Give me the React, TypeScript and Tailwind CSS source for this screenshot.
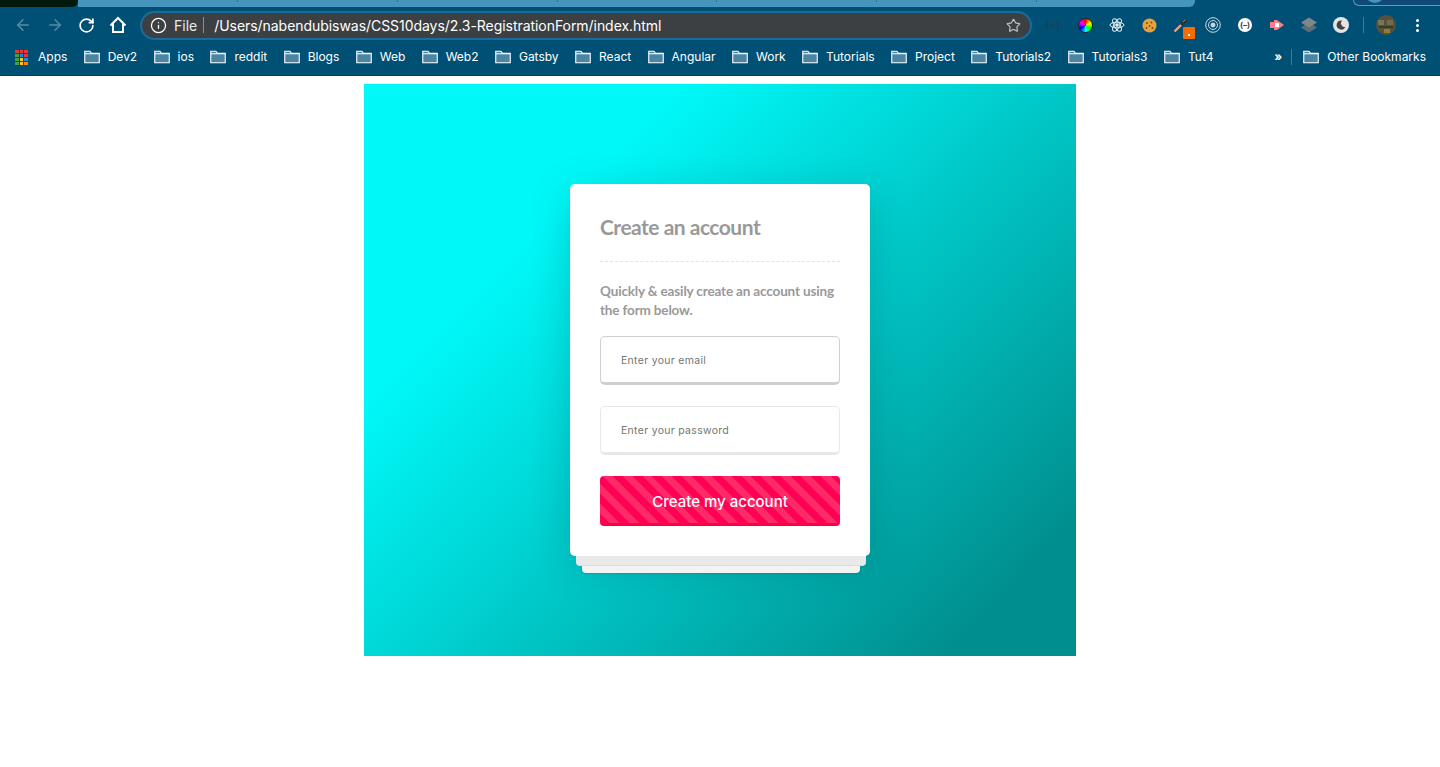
import { ArrowLeft, ArrowRight, RotateCw, Info, Star } from "lucide-react";

const tabs = [160, 160, 160, 159, 160, 160];

const bookmarks = [
  "Dev2", "ios", "reddit", "Blogs", "Web", "Web2", "Gatsby", "React", "Angular",
  "Work", "Tutorials", "Project", "Tutorials2", "Tutorials3", "Tut4",
];

function FolderIcon() {
  return (
    <svg width="16" height="14" viewBox="0 0 16 14" className="shrink-0">
      <path
        d="M0.75 1.25h5.2l1.6 2h7.7v9.5H0.75z"
        fill="#4a86a4"
        stroke="#fff"
        strokeWidth="1.1"
      />
      <path d="M0.75 3.75h14.5" stroke="#fff" strokeWidth="1" />
    </svg>
  );
}

function AppsIcon() {
  const colors = [
    "#e53935", "#e53935", "#e53935",
    "#43a047", "#1e88e5", "#e53935",
    "#43a047", "#fbc02d", "#1e88e5",
    "#43a047", "#fbc02d", "#fb8c00",
  ];
  return (
    <div className="grid grid-cols-3 gap-[1px] w-[13px] shrink-0">
      {colors.map((c, i) => (
        <div key={i} className="h-[3px]" style={{ backgroundColor: c }} />
      ))}
    </div>
  );
}

function HomeIcon() {
  return (
    <svg width="18" height="18" viewBox="0 0 18 18" fill="none" stroke="#fff" strokeWidth="2">
      <path d="M1.5 9.5 9 2l7.5 7.5" strokeLinejoin="miter" />
      <path d="M4 7.5V16h10V7.5" />
    </svg>
  );
}

function ExtensionIcons() {
  return (
    <div className="flex items-center ml-[5px]">
      <div className="w-8 flex justify-center">
        <span className="text-[10px] font-bold text-[#1d4258] tracking-tight">{"{=}"}</span>
      </div>
      <div className="w-8 flex justify-center">
        <div className="w-[15px] h-[15px] rounded-full bg-[conic-gradient(#f00,#ff0,#0f0,#0ff,#00f,#f0f,#f00)] border border-[#222]" />
      </div>
      <div className="w-8 flex justify-center">
        <svg width="16" height="16" viewBox="0 0 16 16" fill="none" stroke="#e4eef3" strokeWidth="1">
          <ellipse cx="8" cy="8" rx="7" ry="2.8" />
          <ellipse cx="8" cy="8" rx="7" ry="2.8" transform="rotate(60 8 8)" />
          <ellipse cx="8" cy="8" rx="7" ry="2.8" transform="rotate(120 8 8)" />
          <circle cx="8" cy="8" r="1.3" fill="#e4eef3" />
        </svg>
      </div>
      <div className="w-8 flex justify-center">
        <svg width="15" height="15" viewBox="0 0 15 15">
          <circle cx="7.5" cy="7.5" r="7" fill="#e9a23b" />
          <circle cx="5" cy="5" r="1" fill="#7a4a12" />
          <circle cx="9.5" cy="4.5" r="0.9" fill="#7a4a12" />
          <circle cx="7.5" cy="8" r="0.9" fill="#7a4a12" />
          <circle cx="4.5" cy="10" r="0.9" fill="#7a4a12" />
          <circle cx="10.5" cy="10" r="1" fill="#7a4a12" />
        </svg>
      </div>
      <div className="w-8 flex justify-center relative">
        <svg width="16" height="16" viewBox="0 0 16 16">
          <path d="M1.5 14.5 8.5 7.5" stroke="#e2a58f" strokeWidth="2.4" />
          <path d="M8 8 13.5 2.5" stroke="#2f3336" strokeWidth="3.6" />
          <path d="M10 5 12.5 2.5" stroke="#8d9194" strokeWidth="1" />
        </svg>
        <div className="absolute left-[18px] top-[10px] w-3 h-3 rounded-[1px] bg-[#f56c00] flex items-end justify-center pb-[3px]">
          <div className="w-[2px] h-[2px] bg-white" />
        </div>
      </div>
      <div className="w-8 flex justify-center">
        <svg width="16" height="16" viewBox="0 0 16 16" fill="none" stroke="#c9dbe4">
          <circle cx="8" cy="8" r="7.3" />
          <circle cx="8" cy="8" r="4.5" />
          <circle cx="8" cy="8" r="2" fill="#c9dbe4" />
        </svg>
      </div>
      <div className="w-8 flex justify-center">
        <div className="w-[14px] h-[14px] rounded-full bg-white flex items-center justify-center text-[8px] leading-none font-bold text-[#444]">
          (–)
        </div>
      </div>
      <div className="w-8 flex justify-center">
        <svg width="16" height="12" viewBox="0 0 16 12">
          <path d="M1 3h4V1h3l7 5-7 5H5V9H1z" fill="#ff7b86" />
          <rect x="6" y="4" width="4" height="4" fill="#fff" />
        </svg>
      </div>
      <div className="w-8 flex justify-center">
        <svg width="16" height="16" viewBox="0 0 16 16">
          <path d="M8 5.5 16 10.5 8 15.5 0 10.5z" fill="#5f6f78" />
          <path d="M8 0.5 16 5.5 8 10.5 0 5.5z" fill="#80878b" />
        </svg>
      </div>
      <div className="w-8 flex justify-center">
        <svg width="16" height="16" viewBox="0 0 16 16">
          <circle cx="8" cy="8" r="8" fill="#e3e3e3" />
          <path d="M9 3.5a4.6 4.6 0 1 0 3.4 6.6A4 4 0 0 1 9 3.5z" fill="#444" />
        </svg>
      </div>
      <div className="w-px h-[16px] bg-[#3f7d9c] mx-[6px]" />
      <svg width="20" height="20" viewBox="0 0 20 20" className="ml-[6px]">
        <defs>
          <clipPath id="avatar-clip">
            <circle cx="10" cy="10" r="10" />
          </clipPath>
        </defs>
        <g clipPath="url(#avatar-clip)">
          <rect width="20" height="20" fill="#56513c" />
          <rect x="2" y="5" width="6" height="5" fill="#7d7650" />
          <rect x="11" y="5" width="6" height="5" fill="#736c4b" />
          <rect x="3" y="11" width="14" height="2" fill="#3b3a30" />
          <rect x="8" y="14" width="6" height="4" fill="#8f7f2e" />
        </g>
      </svg>
      <div className="flex flex-col gap-[2px] ml-[20px] mr-[10px]">
        <div className="w-[3px] h-[3px] rounded-full bg-white" />
        <div className="w-[3px] h-[3px] rounded-full bg-white" />
        <div className="w-[3px] h-[3px] rounded-full bg-white" />
      </div>
    </div>
  );
}

function BrowserChrome() {
  return (
    <div className="font-['Inter',sans-serif] bg-[#005076]">
      {/* tab strip */}
      <div className="flex h-[7px]">
        <div className="w-[78px] bg-[#021a0c] rounded-br-[6px]" />
        <div className="flex w-[1117px] bg-[#4695bd] rounded-br-[6px] overflow-hidden">
          {tabs.map((w, i) => (
            <div key={i} className="h-[2px] border-r border-[#35708f]" style={{ width: w }} />
          ))}
        </div>
        <div className="ml-[158px] flex-1 h-[6px] overflow-hidden bg-[#0f4a78] border-l border-b border-[#5d9cc0] rounded-bl-[8px]">
          <div className="w-[20px] h-[20px] -mt-[17px] ml-[11px] rounded-full bg-[#4695bd]" />
        </div>
      </div>
      {/* toolbar */}
      <div className="flex items-center h-[36px] pl-[14px]">
        <ArrowLeft size={18} strokeWidth={2} className="text-[#5a8aa3]" />
        <ArrowRight size={18} strokeWidth={2} className="text-[#5a8aa3] ml-[14px]" />
        <RotateCw size={17} strokeWidth={2.4} className="text-white ml-[14px]" />
        <div className="ml-[14px]">
          <HomeIcon />
        </div>
        <div className="flex items-center w-[892px] h-[29px] ml-[13px] rounded-full bg-[#3c4043] border-2 border-[#1a6b9e]">
          <Info size={17} strokeWidth={1.8} className="text-white ml-[8px]" />
          <span className="ml-[7px] text-[14px] text-[#e8eaed]">File</span>
          <div className="w-px h-[16px] bg-[#8a8d90] ml-[6px]" />
          <span className="ml-[10px] text-[14px] tracking-[-0.05px] text-white">/Users/nabendubiswas/CSS10days/2.3-RegistrationForm/index.html</span>
          <Star size={15} strokeWidth={1.8} className="text-[#c4c7c9] ml-auto mr-[9px]" />
        </div>
        <ExtensionIcons />
      </div>
      {/* bookmarks bar */}
      <div className="flex items-center h-[33px] pl-[15px] pb-[4px] border-b border-[#03395a] text-[12px] text-white">
        <AppsIcon />
        <span className="ml-[10px]">Apps</span>
        {bookmarks.map((b) => (
          <div key={b} className="flex items-center gap-2 ml-[16.4px]">
            <FolderIcon />
            <span>{b}</span>
          </div>
        ))}
        <span className="ml-auto font-bold">»</span>
        <div className="w-px h-[16px] bg-[#3f7d9c] ml-[9px]" />
        <div className="flex items-center gap-2 ml-[11px] mr-[14px]">
          <FolderIcon />
          <span>Other Bookmarks</span>
        </div>
      </div>
    </div>
  );
}

function SignupCard() {
  return (
    <div className="relative w-[300px]">
      {/* soft shadow sits under the stacked sheets */}
      <div className="absolute inset-0 rounded-[5px] shadow-[0_10px_40px_rgba(0,60,70,0.22)]" />
      <div className="absolute left-[12px] right-[10px] -bottom-[17px] h-[20px] bg-[#f3f3f3] rounded-b-[4px] shadow-[0_1px_2px_rgba(0,0,0,0.12)]" />
      <div className="absolute left-[6px] right-[4px] -bottom-[10px] h-[20px] bg-[#e9e9e9] border-b border-[#dcdcdc] rounded-b-[4px]" />
      <div className="relative bg-white rounded-[5px] p-[30px] h-[372px]">
        <h1 className="font-['Lato',sans-serif] font-bold text-[#999] text-[21px] leading-[26px] tracking-[-0.5px]">
          Create an account
        </h1>
        <div className="mt-[21px] border-t border-dashed border-[#e4e4e4]" />
        <p className="mt-[20px] font-['Lato',sans-serif] font-bold text-[#999] text-[13.5px] leading-[19px] tracking-[-0.15px]">
          Quickly &amp; easily create an account using the form below.
        </p>
        <input
          placeholder="Enter your email"
          className="block w-full h-[49px] mt-[16px] pl-[20px] pt-[2px] rounded-[5px] bg-white border border-[#cfcfcf] border-b-[3px] font-['Inter',sans-serif] text-[10.5px] tracking-[0.3px] placeholder:text-[#757575] outline-none"
        />
        <input
          placeholder="Enter your password"
          className="block w-full h-[49px] mt-[21px] pl-[20px] pt-[2px] rounded-[5px] bg-white border border-[#e8e8e8] border-b-[3px] font-['Inter',sans-serif] text-[10.5px] tracking-[0.3px] placeholder:text-[#757575] outline-none"
        />
        <button className="block w-full h-[50px] mt-[21px] pt-[6px] rounded-[4px] border-b-[3px] border-[#ff0044] text-white text-[15px] font-medium font-['Inter',sans-serif] bg-[repeating-linear-gradient(45deg,#ff0055,#ff0055_7px,#ff2a68_7px,#ff2a68_14px)]">
          Create my account
        </button>
      </div>
    </div>
  );
}

export default function App() {
  return (
    <div className="min-h-[767px] bg-white">
      <BrowserChrome />
      <div className="pt-2">
        <div className="mx-auto w-[712px] flex justify-center py-[100px] bg-[linear-gradient(135deg,#00f8f8_25%,#008e8e_90%)]">
          <SignupCard />
        </div>
      </div>
    </div>
  );
}
